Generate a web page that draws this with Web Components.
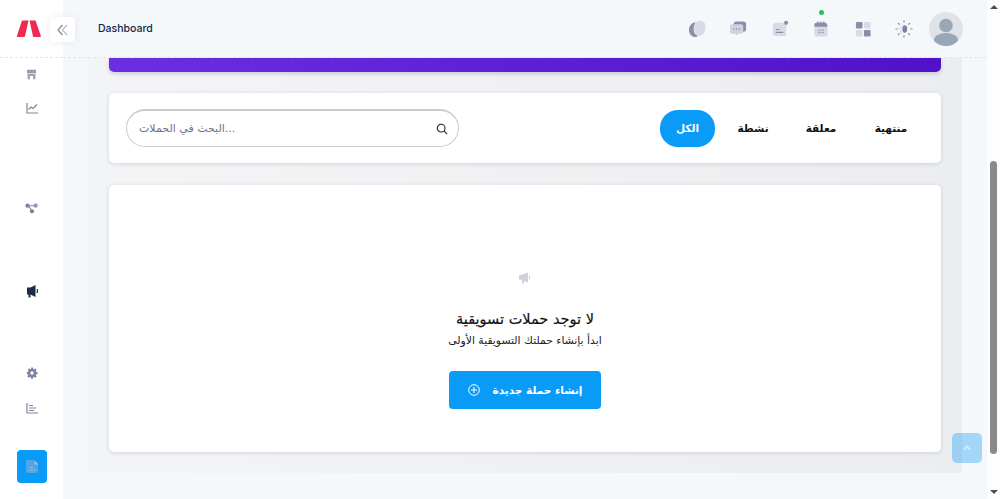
<!DOCTYPE html>
<html lang="ar">
<head>
<meta charset="utf-8">
<title>Dashboard</title>
<style>
  html, body { margin: 0; height: 100%; overflow: hidden; }
  body {
    display: grid;
    grid-template-columns: 63px 1fr 13px;
    height: 499px;
    background: #f5f8fb;
    font-family: "DejaVu Sans", "Noto Sans", sans-serif;
    color: #111;
  }
</style>
</head>
<body>
<side-bar></side-bar>
<main-area></main-area>
<fake-scrollbar></fake-scrollbar>
<scroll-top></scroll-top>

<script>
const ICONS = {
  shop: `<g transform="translate(0 1)"><path fill="#8a8fa8" d="M1.500 0h11v4.500h-11z"/><path fill="#fff" d="M4.500.5h1v3h-1zM8.500.5h1v3h-1z" opacity=".6"/><path fill="#8a8fa8" opacity=".85" d="M2 5.500h10V12H9V8H5v4H2z"/></g>`,
  chart: `<path fill="none" stroke="#7d83a0" stroke-width="1.200" d="M2 2v10h11"/><path fill="none" stroke="#7d83a0" stroke-width="1.200" d="M3.500 8.500l2.500-2.500 2 1.500 4-4"/>`,
  nodes: `<path fill="none" stroke="#7d83a0" stroke-width="1.100" d="M3 4h9M3 4l4.500 5"/><circle cx="2.700" cy="4" r="2.300" fill="#7d83a0"/><circle cx="11.500" cy="4" r="2.300" fill="#9197b2"/><circle cx="7.500" cy="10" r="2.300" fill="#7d83a0"/>`,
  horn: `<path fill="#1f2a44" d="M2 3.500h3.500l5-2.500v12l-5-2.500v3H3.500v-3H2z"/><path fill="none" stroke="#1f2a44" stroke-width="1.200" d="M12.300 5v4"/>`,
  gear: `<path fill="#7d83a0" fill-rule="evenodd" d="M6 1.500h2l.4 1.600 1.200.5 1.400-.9 1.400 1.400-.9 1.400.5 1.200 1.600.4v2l-1.600.4-.5 1.200.9 1.400-1.400 1.400-1.400-.9-1.200.5-.4 1.600H6l-.4-1.600-1.200-.5-1.400.9-1.400-1.400.9-1.400-.5-1.200L.900 9V7l1.600-.4.500-1.200-.9-1.400L3.500 2.600l1.400.9 1.200-.5zM7 6a2 2 0 1 0 0 4 2 2 0 0 0 0-4z" transform="translate(0 -1)"/>`,
  bars: `<path fill="none" stroke="#7d83a0" stroke-width="1.200" d="M2 2v10h11"/><path fill="none" stroke="#7d83a0" stroke-width="1.200" d="M4 4.500h4M4 7h7M4 9.500h5"/>`
}

const ICON_SIZE = { shop: 11, gear: 12, nodes: 13 }

const TOP_ICONS = {
  blobs: `<path fill="#8a8fa8" d="M8 2.500C4 3 1 6.500 1 10.500 1 14.500 4 18 7.500 18c1.500 0 2.500-.5 3-1.500-3-1-4.500-3-4.500-6.500 0-3 1-5.500 2-7.500z"/><path fill="#d8dbe5" d="M11 1c4-.5 7.500 1 7.500 6.500 0 6-3 9.500-7 9.500-3 0-5-3-5-7 0-4.500 1.500-8.500 4.500-9z"/>`,
  chat: `<rect x="5" y="1.500" width="13" height="11" rx="2.500" fill="#8a8fa8"/><path fill="#d0d3df" d="M3 4.500h10a2 2 0 0 1 2 2v6a2 2 0 0 1-2 2H9.500L8 16.500l-1.500-2H3a2 2 0 0 1-2-2v-6a2 2 0 0 1 2-2z"/><g fill="#8a8fa8"><circle cx="5" cy="9.500" r=".8"/><circle cx="8" cy="9.500" r=".8"/><circle cx="11" cy="9.500" r=".8"/></g>`,
  note: `<rect x="2" y="3" width="14" height="14" rx="3" fill="#d8dbe5"/><circle cx="16" cy="3" r="2.200" fill="#8a8fa8"/><path stroke="#8a8fa8" stroke-width="1.200" d="M5 10h4M5 13h8"/>`,
  calendar: `<rect x="2.500" y="3" width="14" height="14.500" rx="3" fill="#d8dbe5"/><path fill="#8a8fa8" d="M2.500 7V5a2 2 0 0 1 2-2h1V1.500H7V3h1.700V1.500h1.500V3h1.600V1.500h1.500V3h.2a2.500 2.500 0 0 1 2.500 2v2z"/><g fill="#8a8fa8"><rect x="6.500" y="10" width="1.300" height="1.300"/><rect x="8.900" y="10" width="1.300" height="1.300"/><rect x="11.300" y="10" width="1.300" height="1.300"/><rect x="6.500" y="12.500" width="1.300" height="1.300"/><rect x="8.900" y="12.500" width="1.300" height="1.300"/><rect x="11.300" y="12.500" width="1.300" height="1.300"/></g>`,
  grid: `<rect x="2" y="2" width="7" height="7" rx="1.200" fill="#8a8fa8"/><rect x="10.500" y="2" width="7" height="7" rx="1.200" fill="#d8dbe5"/><rect x="2" y="10.500" width="7" height="7" rx="1.200" fill="#d8dbe5"/><rect x="10.500" y="10.500" width="7" height="7" rx="1.200" fill="#8a8fa8"/>`,
  sun: `<ellipse cx="10.300" cy="9.500" rx="2.600" ry="4" fill="#7d83a0"/><path fill="none" stroke="#cfd2dd" stroke-width="1" d="M8 5a5 5 0 0 0 0 9"/><path stroke="#8a8fa8" stroke-width="1.300" stroke-linecap="round" d="M9.500 1v1.500M9.500 16.500V18M1 9.500h1.500M16.500 9.500H18M3.500 3.500l1 1M14.500 14.500l1 1M3.500 15.500l1-1M14.500 4.500l1-1"/>`
}

class NavIcon extends HTMLElement {
  connectedCallback(){
    const name = this.getAttribute('name')
    const size = ICON_SIZE[name] || 14
    this.attachShadow({mode: 'open'}).innerHTML = `
      <style>
        :host { display: flex; justify-content: center; align-items: center; height: 33px; }
        svg { width: ${size}px; height: ${size}px; display: block; }
      </style>
      <svg viewBox="0 0 14 14">${ICONS[name]}</svg>
    `
  }
}
customElements.define('nav-icon', NavIcon)

class SideBar extends HTMLElement {
  constructor(){
    super()
    this.attachShadow({mode: 'open'}).innerHTML = `
      <style>
        :host {
          display: flex;
          flex-direction: column;
          background: #fff;
          height: 499px;
          position: relative;
          z-index: 3;
        }
        .brand {
          height: 57px;
          padding-left: 17px;
          display: flex;
          align-items: center;
          border-bottom: 1px dashed #e4e6ef;
        }
        .brand svg { width: 24px; height: 18px; margin-top: 1px; }
        .toggle {
          position: absolute;
          left: 50px;
          top: 17px;
          width: 25px;
          height: 25px;
          background: #fff;
          border-radius: 4px;
          box-shadow: 0 0 8px rgba(60, 70, 110, .1);
          display: flex;
          align-items: center;
          justify-content: center;
        }
        .toggle svg { width: 12px; height: 12px; }
        nav { display: flex; flex-direction: column; }
        nav-icon:nth-child(3) { margin-top: 68px; }
        nav-icon:nth-child(4), nav-icon:nth-child(5) { margin-top: 49px; }
        nav-icon:nth-child(6) { margin-top: 2px; }
        .foot { margin-top: auto; padding: 0 16px 16px 17px; }
        .foot div {
          width: 30px;
          height: 33px;
          background: #0a9bf7;
          border-radius: 4px;
          display: flex;
          align-items: center;
          justify-content: center;
        }
        .foot svg { width: 15px; height: 15px; }
      </style>
      <div class="brand">
        <svg viewBox="0 0 24 18">
          <path fill="#f1284f" d="M5 .5h6.500L8 16.300a1 1 0 0 1-1 .7H1a1 1 0 0 1-1-1.300z"/>
          <path fill="#f1284f" d="M12.500.5H18.500L23.800 15.700a1 1 0 0 1-1 1.300H17a1 1 0 0 1-1-.7z"/>
        </svg>
      </div>
      <div class="toggle">
        <svg viewBox="0 0 12 12" fill="none" stroke="#8388a4" stroke-width="1.200">
          <path d="M5.500 1L1 6l4.500 5"/><path stroke="#b5b9cb" d="M10 1L5.500 6l4.500 5"/>
        </svg>
      </div>
      <nav>
        <nav-icon name="shop"></nav-icon>
        <nav-icon name="chart"></nav-icon>
        <nav-icon name="nodes"></nav-icon>
        <nav-icon name="horn"></nav-icon>
        <nav-icon name="gear"></nav-icon>
        <nav-icon name="bars"></nav-icon>
      </nav>
      <div class="foot">
        <div>
          <svg viewBox="0 0 15 15">
            <path fill="#4ea6e6" d="M2 1h7l4 4v7a2 2 0 0 1-2 2H3a2 2 0 0 1-2-2V2a1 1 0 0 1 1-1z"/>
            <path fill="#d9a9bd" d="M9.500 1.500l4 4h-4z"/>
            <path stroke="#e8a99b" stroke-width=".8" d="M5 8.500h3M3.500 11h7"/>
          </svg>
        </div>
      </div>
    `
  }
}
customElements.define('side-bar', SideBar)

class TopIcon extends HTMLElement {
  connectedCallback(){
    this.attachShadow({mode: 'open'}).innerHTML = `
      <style>
        :host { display: block; width: 18px; height: 18px; position: relative; }
        svg { width: 18px; height: 18px; display: block; }
        i {
          position: absolute;
          top: -9.500px;
          left: 6.500px;
          width: 5px;
          height: 5px;
          border-radius: 50%;
          background: #22c55e;
        }
      </style>
      ${this.hasAttribute('dot') ? '<i></i>' : ''}
      <svg viewBox="0 0 19 19">${TOP_ICONS[this.getAttribute('name')]}</svg>
    `
  }
}
customElements.define('top-icon', TopIcon)

class TopBar extends HTMLElement {
  constructor(){
    super()
    this.attachShadow({mode: 'open'}).innerHTML = `
      <style>
        :host {
          display: flex;
          align-items: center;
          justify-content: space-between;
          height: 57px;
          padding: 0 24px 0 35px;
          border-bottom: 1px dashed #e4e6ef;
        }
        .title { font: 500 10.500px/1 Inter, "Liberation Sans", sans-serif; color: #12264a; margin-top: 2px; }
        .tools { display: flex; align-items: center; gap: 23.400px; }
        .avatar { width: 34px; height: 34px; margin-left: -7.400px; display: block; }
      </style>
      <span class="title">Dashboard</span>
      <div class="tools">
        <top-icon name="blobs"></top-icon>
        <top-icon name="chat"></top-icon>
        <top-icon name="note"></top-icon>
        <top-icon name="calendar" dot></top-icon>
        <top-icon name="grid"></top-icon>
        <top-icon name="sun"></top-icon>
        <svg class="avatar" viewBox="0 0 34 34">
          <defs><clipPath id="a"><circle cx="17" cy="17" r="17"/></clipPath></defs>
          <circle cx="17" cy="17" r="17" fill="#dfe3e8"/>
          <g clip-path="url(#a)" fill="#98a6b5">
            <circle cx="17" cy="13.500" r="6.800"/>
            <ellipse cx="17" cy="28" rx="12" ry="7"/>
          </g>
        </svg>
      </div>
    `
  }
}
customElements.define('top-bar', TopBar)

class FilterCard extends HTMLElement {
  constructor(){
    super()
    this.attachShadow({mode: 'open'}).innerHTML = `
      <style>
        :host {
          display: flex;
          align-items: center;
          justify-content: space-between;
          height: 70px;
          padding: 0 15px 0 17px;
          background: #fff;
          border-radius: 5px;
          box-shadow: 0 1px 4px rgba(50, 60, 90, .16);
        }
        .search {
          width: 333px;
          height: 38px;
          box-sizing: border-box;
          border: 1px solid #c9ccd4;
          border-top-width: 2px;
          border-radius: 19px;
          display: flex;
          align-items: center;
          justify-content: space-between;
          padding: 0 10px 0 12px;
          font-size: 11px;
          color: #6f7486;
        }
        .search svg { width: 12px; height: 12px; }
        .tabs { display: flex; font-size: 10.500px; font-weight: 700; color: #111; }
        .tabs span {
          height: 37px;
          width: 70px;
          border-radius: 18px;
          display: flex;
          align-items: center;
          justify-content: center;
        }
        .tabs .on { background: #0a9bf7; color: #fff; width: 55px; margin-right: 5px; }
        .tabs .on + span { width: 66px; }
      </style>
      <div class="search">
        <span dir="ltr">البحث في الحملات...</span>
        <svg viewBox="0 0 14 14" fill="none" stroke="#222" stroke-width="1.300">
          <circle cx="6" cy="6" r="4.500"/><path d="M9.200 9.200l3.800 3.800"/>
        </svg>
      </div>
      <div class="tabs">
        <span class="on">الكل</span>
        <span>نشطة</span>
        <span>معلقة</span>
        <span>منتهية</span>
      </div>
    `
  }
}
customElements.define('filter-card', FilterCard)

class EmptyState extends HTMLElement {
  constructor(){
    super()
    this.attachShadow({mode: 'open'}).innerHTML = `
      <style>
        :host {
          display: flex;
          flex-direction: column;
          align-items: center;
          height: 267px;
          box-sizing: border-box;
          padding-top: 86px;
          background: #fff;
          border-radius: 5px;
          box-shadow: 0 1px 4px rgba(50, 60, 90, .16);
        }
        .horn { width: 14px; height: 14px; display: block; }
        h3 { margin: 24px 0 0; font-size: 14.500px; line-height: 20px; font-weight: 400; color: #111; -webkit-text-stroke: .2px #111; }
        p { margin: 4px 0 0; font-size: 10.800px; line-height: 16px; color: #222; }
        button {
          margin-top: 22px;
          width: 152px;
          height: 38px;
          border: 0;
          border-radius: 4px;
          background: #0a9bf7;
          color: #fff;
          font: 700 10.500px "DejaVu Sans", sans-serif;
          display: flex;
          flex-direction: row-reverse;
          align-items: center;
          justify-content: center;
          gap: 13px;
        }
        button svg { width: 12px; height: 12px; }
      </style>
      <svg class="horn" viewBox="0 0 14 14" fill="#ced1dc">
        <path d="M1 4.500l9-3v10l-4-1.500V12.500H4V9L1 8.500z"/><path d="M11.500 4.500v4" stroke="#ced1dc"/>
      </svg>
      <h3>لا توجد حملات تسويقية</h3>
      <p>ابدأ بإنشاء حملتك التسويقية الأولى</p>
      <button>
        <span>إنشاء حملة جديدة</span>
        <svg viewBox="0 0 12 12" fill="none" stroke="#fff" stroke-width="1">
          <circle cx="6" cy="6" r="5.300"/><path d="M6 3v6M3 6h6"/>
        </svg>
      </button>
    `
  }
}
customElements.define('empty-state', EmptyState)

class MainArea extends HTMLElement {
  constructor(){
    super()
    this.attachShadow({mode: 'open'}).innerHTML = `
      <style>
        :host { display: block; height: 499px; overflow: hidden; }
        .panel {
          margin: 0 25px;
          height: 415px;
          box-sizing: border-box;
          padding: 0 21px;
          background: linear-gradient(90deg, #f2f4f6, #ebedf0);
          display: flex;
          flex-direction: column;
          gap: 21px;
        }
        .banner {
          height: 14px;
          background: linear-gradient(90deg, #6a2fe0, #4f12c9);
          border-radius: 0 0 5px 5px;
          box-shadow: 0 2px 4px rgba(50, 60, 90, .2);
        }
        filter-card + empty-state { margin-top: 1px; }
      </style>
      <top-bar></top-bar>
      <div class="panel">
        <div class="banner"></div>
        <filter-card></filter-card>
        <empty-state></empty-state>
      </div>
    `
  }
}
customElements.define('main-area', MainArea)

class FakeScrollbar extends HTMLElement {
  constructor(){
    super()
    this.attachShadow({mode: 'open'}).innerHTML = `
      <style>
        :host {
          display: flex;
          flex-direction: column;
          align-items: center;
          justify-content: space-between;
          height: 499px;
          background: #fdfdfd;
          padding: 5px 0;
          box-sizing: border-box;
        }
        .bar { position: absolute; top: 161px; left: 990px; width: 7px; height: 293px; background: #8a8a8a; border-radius: 4px; }
        .up, .down { width: 0; height: 0; border: 4px solid transparent; }
        .up { border-bottom: 4px solid #505050; border-top: 0; }
        .down { border-top: 4px solid #505050; border-bottom: 0; }
      </style>
      <div class="up"></div>
      <div class="bar"></div>
      <div class="down"></div>
    `
  }
}
customElements.define('fake-scrollbar', FakeScrollbar)

class ScrollTop extends HTMLElement {
  constructor(){
    super()
    this.attachShadow({mode: 'open'}).innerHTML = `
      <style>
        :host {
          position: fixed;
          left: 952px;
          top: 433px;
          width: 30px;
          height: 30px;
          background: rgba(10, 155, 247, .35);
          border-radius: 5px;
          display: flex;
          align-items: center;
          justify-content: center;
        }
        svg { width: 8px; height: 8px; margin-top: -1px; }
      </style>
      <svg viewBox="0 0 10 10" fill="none" stroke="#d3eafb" stroke-width="2"><path d="M1 7l4-4 4 4"/></svg>
    `
  }
}
customElements.define('scroll-top', ScrollTop)
</script>
</body>
</html>
